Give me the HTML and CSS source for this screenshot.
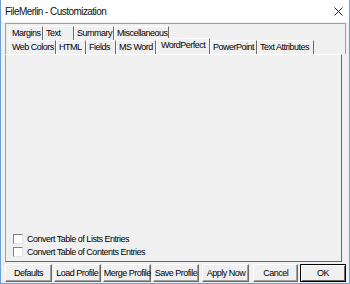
FILE: index.html
```html
<!DOCTYPE html>
<html lang="en">
<head>
    <meta charset="UTF-8">
    <title>FileMerlin - Customization</title>
    <link rel="stylesheet" href="styles.css">
</head>
<body>
    <div class="window">
        <div class="titlebar">
            <span class="title">FileMerlin - Customization</span>
            <svg class="close" width="9" height="9" viewBox="0 0 9 9">
                <path d="M0.5 0.5 L8.5 8.5 M8.5 0.5 L0.5 8.5" stroke="#222" stroke-width="1" fill="none"/>
            </svg>
        </div>
        <div class="client">
            <div class="tabframe">
                <div class="header">
                    <div class="tabrow top">
                        <span class="tab">Margins</span>
                        <span class="tab">Text</span>
                        <span class="tab">Summary</span>
                        <span class="tab">Miscellaneous</span>
                    </div>
                    <div class="tabrow bottom">
                        <span class="tab">Web Colors</span>
                        <span class="tab">HTML</span>
                        <span class="tab">Fields</span>
                        <span class="tab">MS Word</span>
                        <span class="tab active">WordPerfect</span>
                        <span class="tab">PowerPoint</span>
                        <span class="tab">Text Attributes</span>
                    </div>
                </div>
                <div class="panel">
                    <label class="check"><span class="box"></span>Convert Table of Lists Entries</label>
                    <label class="check"><span class="box"></span>Convert Table of Contents Entries</label>
                </div>
            </div>
            <div class="buttons">
                <button class="btn">Defaults</button>
                <button class="btn">Load Profile</button>
                <button class="btn wide">Merge Profile</button>
                <button class="btn">Save Profile</button>
                <button class="btn apply">Apply Now</button>
                <button class="btn cancel">Cancel</button>
                <button class="btn ok">OK</button>
            </div>
        </div>
    </div>
</body>
</html>
```

FILE: styles.css
```css
body {
    margin: 0;
    width: 350px;
    height: 284px;
    overflow: hidden;
    font-family: "Liberation Sans", Arial, sans-serif;
    font-size: 9px;
    letter-spacing: -0.5px;
    color: #000;
}
.window {
    width: 350px;
    height: 284px;
    box-sizing: border-box;
    border: 1px solid #6f9fd8;
    border-top: none;
    background-color: #f0f0f0;
    display: flex;
    flex-direction: column;
}
.titlebar {
    height: 22px;
    background-color: #fff;
    display: flex;
    align-items: center;
    justify-content: space-between;
    padding: 0 6px 0 4px;
}
.title {
    font-size: 10px;
    letter-spacing: -0.55px;
    color: #111;
}
.client {
    flex: 1;
    display: flex;
    flex-direction: column;
    padding: 1px 3px 0 4px;
}
.tabframe {
    display: flex;
    flex-direction: column;
    height: 239px;
}
.header {
    border-top: 1px solid #a0a0a0;
    border-left: 1px solid #a0a0a0;
    border-right: 1px solid #a0a0a0;
    padding: 2px 0 0 3px;
}
.tabrow {
    display: grid;
    height: 14px;
}
.tabrow.top {
    grid-template-columns: 34px 31px 40px 55px;
}
.tabrow.bottom {
    grid-template-columns: 47px 30px 30px 40px 54px 47px 57px;
}
.tab {
    box-sizing: border-box;
    height: 14px;
    line-height: 13px;
    padding: 0 0 0 2px;
    border-top: 1px solid #fff;
    border-left: 1px solid #fff;
    border-right: 1px solid #696969;
    white-space: nowrap;
    overflow: hidden;
}
.tab.active {
    height: 16px;
    line-height: 12px;
    margin-top: -2px;
    margin-bottom: -1px;
    padding-left: 4px;
    background-color: #f0f0f0;
    position: relative;
    z-index: 1;
}
.panel {
    flex: 1;
    margin-right: 4px;
    border-top: 1px solid #fff;
    border-left: 1px solid #a0a0a0;
    border-right: 1px solid #696969;
    border-bottom: 1px solid #696969;
    display: flex;
    flex-direction: column;
    justify-content: flex-end;
    gap: 3px;
    padding: 0 0 4px 7px;
}
.check {
    display: flex;
    align-items: center;
    gap: 4px;
    height: 10px;
}
.box {
    width: 10px;
    height: 10px;
    box-sizing: border-box;
    background-color: #fff;
    border-top: 1px solid #808080;
    border-left: 1px solid #808080;
    border-right: 1px solid #e3e3e3;
    border-bottom: 1px solid #e3e3e3;
}
.buttons {
    display: flex;
    gap: 2px;
    margin-top: 2px;
}
.btn {
    width: 47px;
    height: 18px;
    padding: 0;
    font-family: "Liberation Sans", Arial, sans-serif;
    font-size: 9px;
    letter-spacing: -0.5px;
    color: #000;
    background-color: #f0f0f0;
    border-top: 1px solid #fff;
    border-left: 1px solid #fff;
    border-right: 1px solid #696969;
    border-bottom: 1px solid #696969;
    box-shadow: inset -1px -1px 0 #a0a0a0;
    white-space: nowrap;
}
.btn.wide {
    width: 48px;
}
.apply {
    margin-left: 1px;
}
.cancel {
    width: 45px;
    margin-left: 2px;
}
.ok {
    width: 46px;
    border: 1px solid #000;
    box-shadow: inset 1px 1px 0 #fff, inset -1px -1px 0 #696969;
}
```
